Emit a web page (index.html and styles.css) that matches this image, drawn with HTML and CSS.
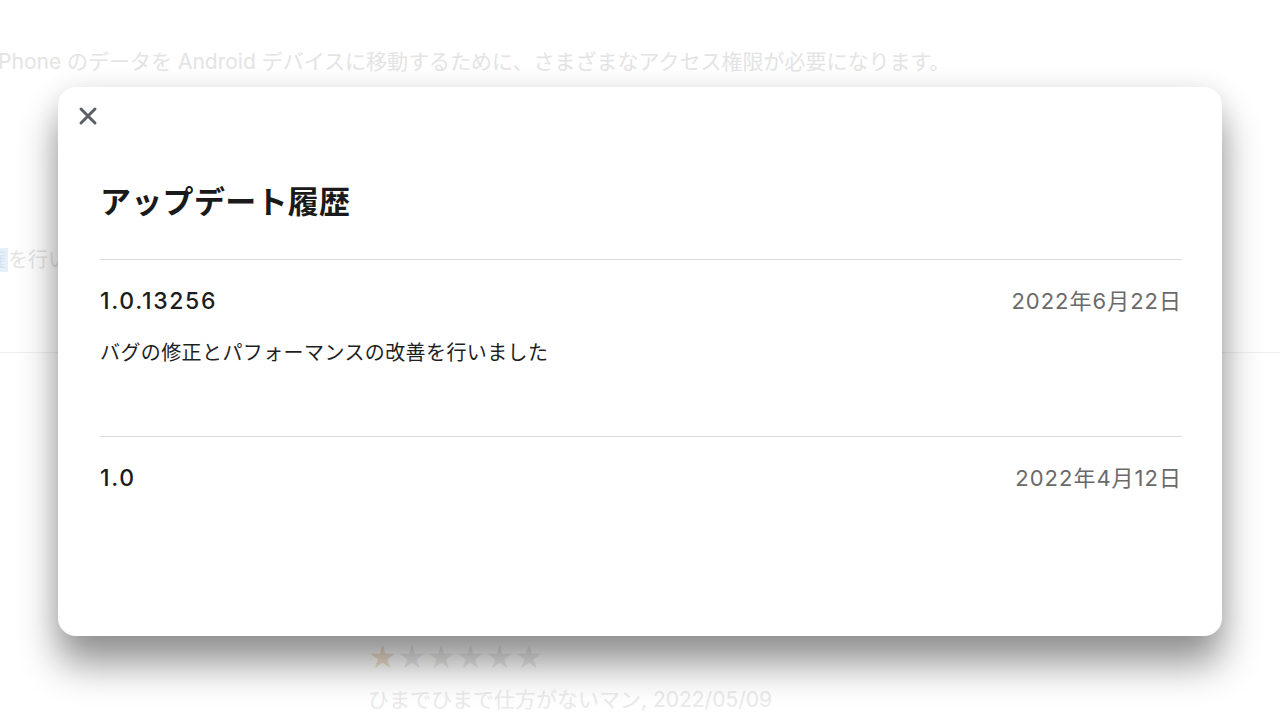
FILE: index.html
```html
<!DOCTYPE html>
<html lang="ja">
<head>
    <meta charset="UTF-8">
    <meta name="viewport" content="width=device-width, initial-scale=1.0">
    <title>アップデート履歴</title>
    <link rel="stylesheet" href="styles.css">
</head>
<body>
    <div class="page">
        <p class="page-lead">iPhone のデータを Android デバイスに移動するために、さまざまなアクセス権限が必要になります。</p>
        <p class="page-note"><span class="mark">権</span>を行います。</p>
        <hr class="page-rule">
        <div class="review">
            <div class="review-stars"><span class="star on">★</span><span class="star">★★★★★</span></div>
            <div class="review-meta">ひまでひまで仕方がないマン, 2022/05/09</div>
        </div>
    </div>

    <div class="modal">
        <button class="modal-close" aria-label="閉じる">
            <svg width="20" height="20" viewBox="0 0 20 20"><path d="M3 3L17 17M17 3L3 17" stroke="#5c5f66" stroke-width="3" stroke-linecap="round"/></svg>
        </button>
        <h2 class="modal-title">アップデート履歴</h2>
        <div class="history">
            <div class="entry">
                <div class="entry-head">
                    <span class="entry-version">1.0.13256</span>
                    <span class="entry-date">2022年6月22日</span>
                </div>
                <p class="entry-text">バグの修正とパフォーマンスの改善を行いました</p>
            </div>
            <div class="entry">
                <div class="entry-head">
                    <span class="entry-version">1.0</span>
                    <span class="entry-date">2022年4月12日</span>
                </div>
            </div>
        </div>
    </div>
</body>
</html>
```

FILE: styles.css
```css
body {
    margin: 0;
    background: #fff;
    font-family: Inter, "Noto Sans CJK JP", sans-serif;
    color: #1b1b1b;
    overflow: hidden;
    height: 720px;
}

/* faded page behind the dialog */
.page { padding-top: 47px; color: #e4e4e4; }
.page-lead { margin: 0 0 0 -7px; font-size: 21px; line-height: 30px; white-space: nowrap; }
.page-note { margin: 168px 0 0 -16px; font-size: 20px; line-height: 30px; }
.mark { background: #e6f0fb; color: #d6e3f3; padding: 0 2px; }
.page-rule { margin: 77px 0 0; border: 0; border-top: 1px solid #f0f0f0; }
.review { margin: 288px 0 0 368px; }
.review-stars { font-size: 28px; line-height: 34px; color: #ececec; }
.review-stars .on { color: #f1e3cf; }
.review-meta { margin-top: 10px; font-size: 21px; line-height: 30px; color: #eaeaea; }

.modal {
    position: absolute;
    left: 58px;
    top: 87px;
    width: 1164px;
    height: 549px;
    box-sizing: border-box;
    padding: 18px 40px 0 42px;
    background: #fff;
    border-radius: 18px;
    box-shadow: 0 28px 38px rgba(0, 0, 0, 0.42), 0 0 26px rgba(0, 0, 0, 0.08);
}
.modal-close {
    display: block;
    margin-left: -22px;
    padding: 0;
    width: 20px;
    height: 24px;
    border: 0;
    background: none;
    cursor: pointer;
}
.modal-title {
    margin: 51px 0 0;
    font-size: 31px;
    line-height: 44px;
    font-weight: 700;
    color: #1a1a1a;
    letter-spacing: 0.3px;
}
.history { margin-top: 35px; }
.entry { border-top: 1px solid #dcdcdc; height: 176px; }
.entry-head {
    display: flex;
    justify-content: space-between;
    align-items: center;
    padding-top: 26px;
    line-height: 30px;
}
.entry-version { font-size: 23px; font-weight: 500; color: #1c1c1c; letter-spacing: 1.7px; }
.entry-date { font-size: 22px; color: #6a6a6a; letter-spacing: 1px; }
.entry-text { margin: 23px 0 0; font-size: 20px; line-height: 28px; color: #1f1f1f; letter-spacing: 0.4px; }
```
